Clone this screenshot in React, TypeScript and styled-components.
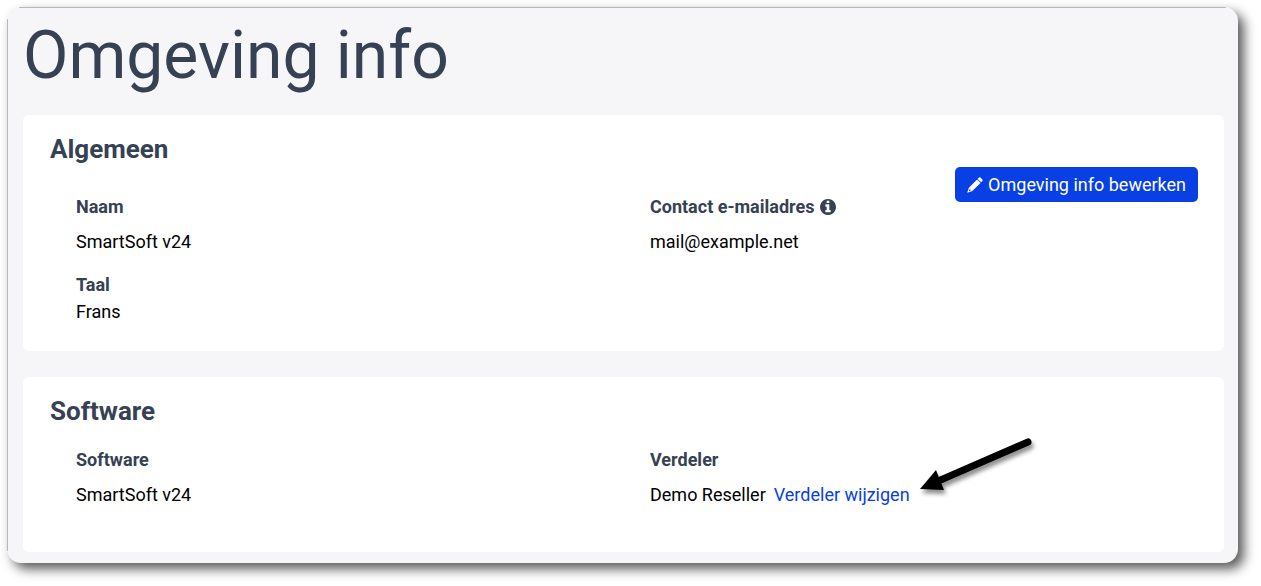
import React from "react";
import styled, { createGlobalStyle } from "styled-components";

const GlobalStyle = createGlobalStyle`
  *, *::before, *::after { box-sizing: border-box; }
  body {
    margin: 0;
    background: #fff;
    color: #000;
    font-family: Roboto, "Liberation Sans", sans-serif;
    font-size: 18px;
    line-height: 27px;
  }
`;

const Page = styled.div`
  padding: 7px 23px 23px 7px;
`;

const Panel = styled.main`
  display: flex;
  flex-direction: column;
  gap: 26px;
  padding: 1px 14px 11px 16px;
  background:
    linear-gradient(#b8b8b8, #b8b8b8) 12px 0 / calc(100% - 24px) 1px no-repeat,
    linear-gradient(#b8b8b8, #b8b8b8) 0 12px / 1px calc(100% - 24px) no-repeat,
    #f6f6f9;
  border-radius: 14px;
  box-shadow: 6px 6px 12px rgba(0, 0, 0, 0.65);
`;

const Title = styled.h1`
  margin: 0 0 -17px;
  padding-bottom: 2px;
  color: #364153;
  font-size: 66px;
  font-weight: 400;
  line-height: 96px;
`;

const Card = styled.section<{ $bottom: number }>`
  padding: 17px 26px ${({ $bottom }) => $bottom}px 27px;
  background: #fff;
  border-radius: 6px;
`;

const Heading = styled.h2`
  margin: 0;
  color: #364153;
  font-size: 26px;
  font-weight: 700;
  line-height: 35px;
`;

const Columns = styled.div`
  display: grid;
  grid-template-columns: 1fr 1fr;
`;

const Column = styled.div`
  display: flex;
  align-items: flex-start;
  justify-content: space-between;
  padding-left: 26px;
`;

const Fields = styled.dl<{ $top: number }>`
  display: flex;
  flex-direction: column;
  gap: 16px;
  margin: 0;
  padding-top: ${({ $top }) => $top}px;
`;

const Field = styled.div<{ $gap?: number }>`
  display: flex;
  flex-direction: column;
  gap: ${({ $gap = 8 }) => $gap}px;
`;

const Label = styled.dt`
  display: flex;
  align-items: center;
  gap: 6px;
  color: #364153;
  font-weight: 700;
  white-space: nowrap;
`;

const Value = styled.dd`
  display: flex;
  gap: 8px;
  margin: 0;
  white-space: nowrap;
`;

const Icon = styled.svg`
  width: 16px;
  height: 16px;
  fill: currentColor;
`;

const EditButton = styled.button`
  display: flex;
  align-items: center;
  gap: 5px;
  height: 35px;
  padding: 0 12px;
  border: 0;
  border-radius: 5px;
  background: #0840e6;
  color: #fff;
  font: inherit;
  white-space: nowrap;
  cursor: pointer;
`;

const LinkAnchor = styled.span`
  position: relative;
`;

const Link = styled.a`
  color: #0840e6;
  text-decoration: none;
`;

const Arrow = styled.svg`
  position: absolute;
  left: 100%;
  bottom: 0;
  overflow: visible;
  pointer-events: none;
  filter: drop-shadow(2px 4px 2px rgba(0, 0, 0, 0.45));
`;

const InfoIcon = () => (
  <Icon viewBox="128 128 1536 1536" aria-hidden>
    <path d="M1152 1376v-160q0-14-9-23t-23-9h-96v-512q0-14-9-23t-23-9h-320q-14 0-23 9t-9 23v160q0 14 9 23t23 9h96v320h-96q-14 0-23 9t-9 23v160q0 14 9 23t23 9h448q14 0 23-9t9-23zm-128-896v-160q0-14-9-23t-23-9h-192q-14 0-23 9t-9 23v160q0 14 9 23t23 9h192q14 0 23-9t9-23zm640 416q0 209-103 385.5t-279.5 279.5-385.5 103-385.5-103-279.5-279.5-103-385.5 103-385.5 279.5-279.5 385.5-103 385.5 103 279.5 279.5 103 385.5z" />
  </Icon>
);

const PencilIcon = () => (
  <Icon viewBox="0 0 16 16" aria-hidden>
    <path
      fillRule="evenodd"
      d="M10.1 2.5 13.5 5.9 5.3 14.1 .2 15.8 1.9 10.7ZM2.6 12.1 1.8 14.2 3.9 13.4ZM10.7 1.9 12 .6Q12.7 0 13.4 .6L15.4 2.6Q16 3.3 15.4 4L14.1 5.3Z"
    />
  </Icon>
);

export default function App() {
  return (
    <>
      <GlobalStyle />
      <Page>
        <Panel>
          <Title>Omgeving info</Title>
          <Card $bottom={26}>
            <Heading>Algemeen</Heading>
            <Columns>
              <Column>
                <Fields $top={26}>
                  <Field>
                    <Label>Naam</Label>
                    <Value>SmartSoft v24</Value>
                  </Field>
                  <Field $gap={0}>
                    <Label>Taal</Label>
                    <Value>Frans</Value>
                  </Field>
                </Fields>
              </Column>
              <Column>
                <Fields $top={26}>
                  <Field>
                    <Label>
                      Contact e-mailadres
                      <InfoIcon />
                    </Label>
                    <Value>mail@example.net</Value>
                  </Field>
                </Fields>
                <EditButton type="button">
                  <PencilIcon />
                  Omgeving info bewerken
                </EditButton>
              </Column>
            </Columns>
          </Card>
          <Card $bottom={44}>
            <Heading>Software</Heading>
            <Columns>
              <Column>
                <Fields $top={17}>
                  <Field>
                    <Label>Software</Label>
                    <Value>SmartSoft v24</Value>
                  </Field>
                </Fields>
              </Column>
              <Column>
                <Fields $top={17}>
                  <Field>
                    <Label>Verdeler</Label>
                    <Value>
                      Demo Reseller
                      <LinkAnchor>
                        <Link href="#verdeler">Verdeler wijzigen</Link>
                        <Arrow width="130" height="80" viewBox="910 428 130 80" aria-hidden>
                          <path d="M1028 442 L936 482" stroke="#000" strokeWidth="7" strokeLinecap="round" />
                          <path d="M920 489 L936 470 L944 490 Z" />
                        </Arrow>
                      </LinkAnchor>
                    </Value>
                  </Field>
                </Fields>
              </Column>
            </Columns>
          </Card>
        </Panel>
      </Page>
    </>
  );
}
